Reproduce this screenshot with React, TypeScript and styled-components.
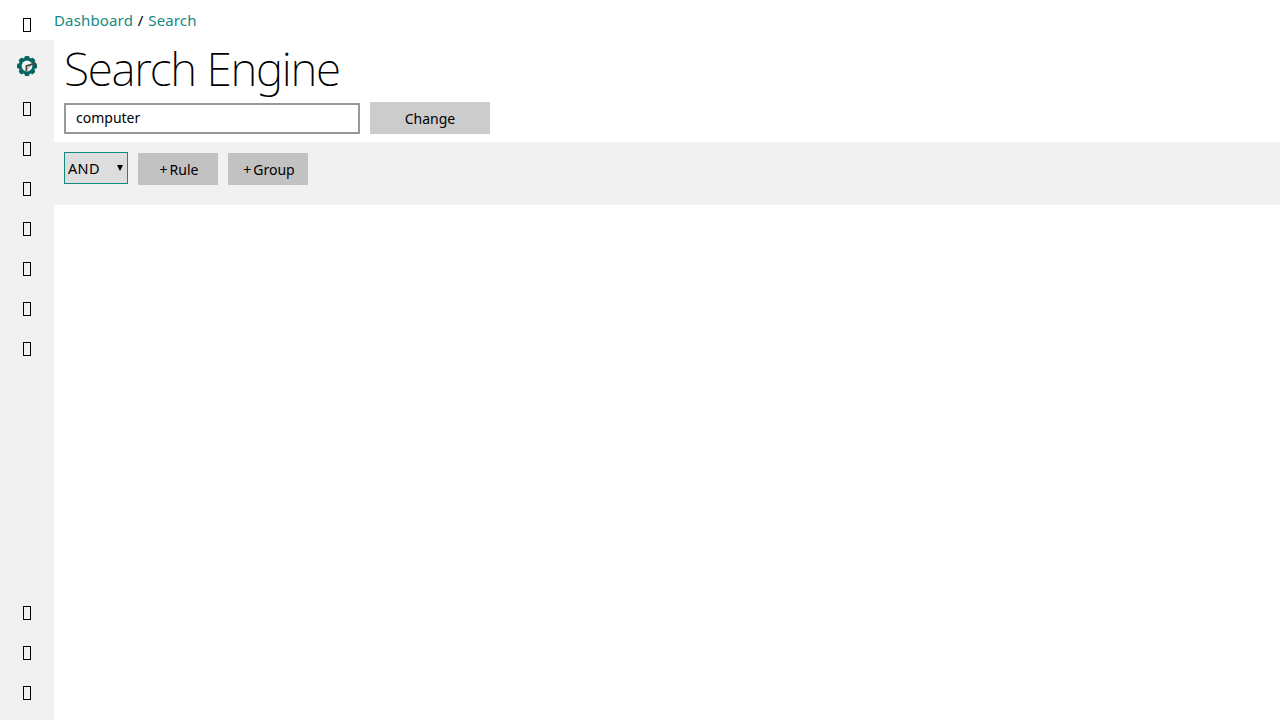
import React from 'react';
import styled, { createGlobalStyle } from 'styled-components';

const Global = createGlobalStyle`
  * { box-sizing: border-box; }
  body { margin: 0; background: #fff; color: #000; font-family: "Noto Sans", "Open Sans", sans-serif; font-size: 14px; }
`;

const Page = styled.div`
  display: flex;
  height: 720px;
  overflow: hidden;
`;

const Sidebar = styled.nav`
  display: flex;
  flex-direction: column;
  width: 54px;
  flex: none;
  padding-bottom: 12px;
  background: linear-gradient(#fff 40px, #f1f1f1 40px);
`;

const NavItem = styled.a`
  display: flex;
  justify-content: center;
  height: 40px;
  padding-top: 18px;
`;

const LogoItem = styled.a`
  display: flex;
  justify-content: center;
  height: 44px;
  padding-top: 16px;
`;

const Glyph = styled.span`
  width: 8px;
  height: 14px;
  border: 1px solid #000;
`;

const Spacer = styled.div`
  flex: 1;
`;

const Main = styled.main`
  flex: 1;
  min-width: 0;
`;

const Breadcrumb = styled.div`
  height: 40px;
  line-height: 40px;
  font-size: 15px;
  white-space: pre;
  letter-spacing: 0.15px;
  word-spacing: 0.7px;
`;

const Crumb = styled.a`
  color: #128a82;
`;

const Title = styled.h1`
  margin: 0;
  padding-left: 10px;
  height: 62px;
  line-height: 56px;
  font-family: "Noto Sans", sans-serif;
  font-size: 46px;
  font-weight: 200;
  letter-spacing: -1.27px;
  white-space: nowrap;
`;

const QueryRow = styled.form`
  display: flex;
  gap: 10px;
  height: 40px;
  padding-left: 10px;
`;

const QueryInput = styled.input`
  width: 296px;
  height: 31px;
  margin-top: 1px;
  padding: 0 10px 2px;
  border: 2px solid #999;
  font: inherit;
  outline: none;
`;

const Button = styled.button<{ $wide?: boolean }>`
  width: ${p => (p.$wide ? 120 : 80)}px;
  height: 32px;
  padding: ${p => (p.$wide ? '1px 0 0' : '1px 0 0 2px')};
  border: 0;
  background: ${p => (p.$wide ? '#ccc' : '#c2c2c2')};
  color: #000;
  font: inherit;
`;

const RuleBar = styled.section`
  display: flex;
  gap: 10px;
  height: 63px;
  padding: 11px 10px;
  background: #f1f1f1;
`;

const Operator = styled.div`
  display: flex;
  align-items: center;
  justify-content: space-between;
  width: 64px;
  height: 32px;
  margin-top: -1px;
  padding: 0 4px 0 3px;
  border: 1px solid #128a82;
  background: #ddd;
  font-size: 14.5px;
  letter-spacing: 0.3px;
`;

const Plus = styled.span`
  margin-right: 2px;
`;

const Gear = () => (
  <svg width="20" height="20" viewBox="0 0 20 20">
    <g fill="#066562">
      {[0, 45, 90, 135].map(a => (
        <rect key={a} x="7.6" y="0" width="4.8" height="20" rx="1.2" transform={`rotate(${a} 10 10)`} />
      ))}
      <circle cx="10" cy="10" r="8.4" />
    </g>
    <circle cx="10" cy="10" r="5.4" fill="#f4f4f4" />
    <path d="M9.4 15V10L19 7.2" fill="none" stroke="#484848" strokeWidth="1.8" />
    <path d="M10.8 13.5V11.3L14 10.2" fill="none" stroke="#aaa" strokeWidth="1" />
  </svg>
);

const Arrow = () => (
  <svg width="6" height="6" viewBox="0 0 6 6">
    <path d="M0 0H6L3 6Z" />
  </svg>
);

const NavItems = ({ count }: { count: number }) => (
  <>
    {Array.from({ length: count }, (_, i) => (
      <NavItem key={i}><Glyph /></NavItem>
    ))}
  </>
);

export default function App() {
  return (
    <Page>
      <Global />
      <Sidebar>
        <NavItems count={1} />
        <LogoItem><Gear /></LogoItem>
        <NavItems count={7} />
        <Spacer />
        <NavItems count={3} />
      </Sidebar>
      <Main>
        <Breadcrumb><Crumb>Dashboard</Crumb> / <Crumb>Search</Crumb></Breadcrumb>
        <Title>Search Engine</Title>
        <QueryRow>
          <QueryInput defaultValue="computer" />
          <Button $wide type="button">Change</Button>
        </QueryRow>
        <RuleBar>
          <Operator>AND<Arrow /></Operator>
          <Button type="button"><Plus>+</Plus>Rule</Button>
          <Button type="button"><Plus>+</Plus>Group</Button>
        </RuleBar>
      </Main>
    </Page>
  );
}
